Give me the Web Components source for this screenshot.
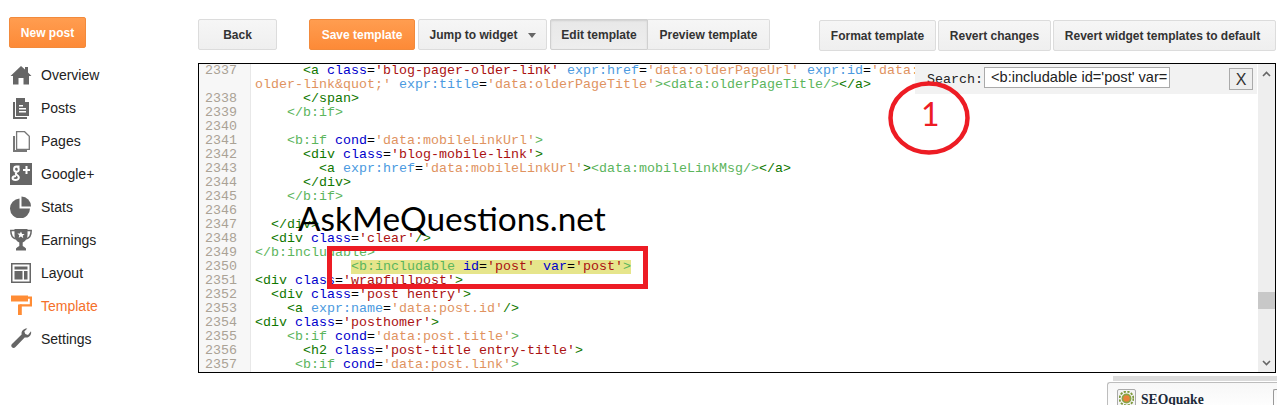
<!DOCTYPE html>
<html><head><meta charset="utf-8"><style>
html,body{margin:0;padding:0;background:#fff;width:1277px;height:405px;overflow:hidden}
body{font-family:"Liberation Sans",Arial,sans-serif}
</style></head><body>
<x-app></x-app>
<script>
const ICONS={
home:'<svg width="22" height="22" viewBox="0 0 22 22"><path fill="#666" d="M11 2 L15 5.6V3h3v5.4L21.5 12H19v8.500h-5.500V14h-5v6.500H3V12H.5z"/></svg>',
posts:'<svg width="22" height="22" viewBox="0 0 22 22"><path fill="#666" d="M3 5h2v15h12v2H3z"/><path fill="#666" d="M6 1h9v4h4v14H6z"/><path fill="#fff" d="M16 1l3 3h-3zM9 8h4v1.500H9zM9 11h7v1.500H9zM9 14h7v1.500H9z"/></svg>',
pages:'<svg width="22" height="22" viewBox="0 0 22 22"><path fill="#777" d="M3 6h2v14h12v2H3z"/><path fill="#fff" stroke="#777" stroke-width="1.300" d="M6.600 1.700h8l4.700 4.500v13.200H6.600z"/></svg>',
gplus:'<svg width="22" height="22" viewBox="0 0 22 22"><rect width="22" height="22" fill="#666"/><path fill="none" stroke="#fff" stroke-width="2" d="M9.500 3.500H6.500C3.500 3.500 3 8.500 6.500 8.800 9.500 9 9.500 4 6.500 3.500M6.500 9.500c-1 1-1 1.500 .5 2.500 3 2 2 5-1.500 5S1 13.500 6 13"/><path fill="none" stroke="#fff" stroke-width="2" d="M13 7h7M16.500 3v8"/></svg>',
stats:'<svg width="22" height="22" viewBox="0 0 22 22"><path fill="#666" d="M9.500 2.500V12.500H20A10 10 0 1 1 9.500 2.500z"/><path fill="#666" d="M11.500 .5A10 10 0 0 1 21 10.500H11.500z"/></svg>',
trophy:'<svg width="22" height="22" viewBox="0 0 22 22"><path fill="#666" d="M4.500 0h13v6c0 4-2.500 6.500-4.800 7.400V17c1 .8 2.300 1.200 3.300 2.500v2H6v-2c1-1.300 2.300-1.700 3.300-2.500v-3.600C7 12.500 4.500 10 4.500 6z"/><path fill="none" stroke="#666" stroke-width="1.500" d="M5 1.500H.8c0 5 1.500 7.500 5 8.500M17 1.500h4.200c0 5-1.500 7.500-5 8.500"/><path fill="#fff" d="M11 2.500l1.100 2.400 2.500.2-1.900 1.700.6 2.500L11 7.500 8.700 8.800l.6-2.500-1.900-1.700 2.500-.2z"/></svg>',
layout:'<svg width="22" height="22" viewBox="0 0 22 22"><path fill="#666" fill-rule="evenodd" d="M1 1h20v20H1zM2.500 2.500v17h17v-17z"/><path fill="#666" d="M4.500 4.500h13v3h-13zM4.500 9h8v8.500h-8zM14 9h3.500v8.500H14z"/></svg>',
template:'<svg width="22" height="22" viewBox="0 0 22 22"><path fill="#ff8c35" d="M1 .5h17v6H1z"/><path fill="none" stroke="#ff8c35" stroke-width="2.200" d="M18 2.600h2.900v7.800H9.500"/><path fill="#ff8c35" d="M8 9.500h3.800v10.500H8z"/></svg>',
settings:'<svg width="22" height="22" viewBox="0 0 22 22"><path fill="#666" d="M21 3.200c.8 3-1.300 6.300-4.700 6.400-.6 0-1.100 0-1.600-.2L5.500 19c-1 1-2.500 1.300-3.500.3S1 17 2 16l9.600-9.500c-.5-2.500.7-5 3.500-5.800.8-.2 1.500-.2 2.200-.1l-3 3 1 2.500 2.700.8z"/></svg>'
};

class XNavItem extends HTMLElement{
  constructor(){super();const s=this.attachShadow({mode:'open'});
    s.innerHTML=`<style>
    :host{display:flex;align-items:center;height:33px;gap:9px;font:14px "Liberation Sans",Arial,sans-serif;color:#222}
    :host([active]){color:#f4702a}
    .i{width:22px;height:22px;display:block}
    svg{display:block}
    </style><span class="i"></span><slot></slot>`;
  }
  connectedCallback(){this.shadowRoot.querySelector('.i').innerHTML=ICONS[this.getAttribute('icon')]||''}
}
customElements.define('x-nav-item',XNavItem);

class XBtn extends HTMLElement{
  constructor(){super();this.attachShadow({mode:'open'}).innerHTML=`<style>
    :host{display:inline-flex;align-items:center;justify-content:center;box-sizing:border-box;height:31px;padding:0 6px;
      font:bold 12px "Liberation Sans",Arial,sans-serif;color:#333;white-space:nowrap;
      background:linear-gradient(#f6f6f6,#efefef);border:1px solid #dcdcdc;border-radius:2px}
    :host([primary]){color:#fff;background:linear-gradient(#ff9d50,#fd8a37);border-color:#f28a3c}
    :host([pressed]){background:linear-gradient(#e8e8e8,#eeeeee);border-color:#d0d0d0;box-shadow:inset 0 1px 2px rgba(0,0,0,.1)}
    :host([seg-l]){border-radius:2px 0 0 2px}
    :host([seg-r]){border-radius:0 2px 2px 0;border-left:0}
    .c{width:0;height:0;border:4px solid transparent;border-top:5px solid #666;border-bottom:0;margin-left:10px;margin-top:2px}
    :host(:not([caret])) .c{display:none}
    </style><slot></slot><span class="c"></span>`;}
}
customElements.define('x-btn',XBtn);

class XSidebar extends HTMLElement{
  constructor(){super();this.attachShadow({mode:'open'}).innerHTML=`<style>
    :host{display:block;box-sizing:border-box;width:198px;padding:17px 0 0 10px}
    x-btn{width:77px;margin-left:-1px;margin-bottom:10px;display:flex}
    nav{display:flex;flex-direction:column}
    </style>
    <x-btn primary>New post</x-btn>
    <nav>
    <x-nav-item icon="home">Overview</x-nav-item>
    <x-nav-item icon="posts">Posts</x-nav-item>
    <x-nav-item icon="pages">Pages</x-nav-item>
    <x-nav-item icon="gplus">Google+</x-nav-item>
    <x-nav-item icon="stats">Stats</x-nav-item>
    <x-nav-item icon="trophy">Earnings</x-nav-item>
    <x-nav-item icon="layout">Layout</x-nav-item>
    <x-nav-item icon="template" active>Template</x-nav-item>
    <x-nav-item icon="settings">Settings</x-nav-item>
    </nav>`;}
}
customElements.define('x-sidebar',XSidebar);

class XToolbar extends HTMLElement{
  constructor(){super();this.attachShadow({mode:'open'}).innerHTML=`<style>
    :host{display:flex;align-items:flex-start;height:44px;padding-top:19px;box-sizing:content-box}
    .g{display:flex}
    .r{display:flex;gap:2px;margin-left:auto;margin-top:1px}
    </style>
    <x-btn style="width:79px">Back</x-btn>
    <x-btn primary style="width:106px;margin-left:32px">Save template</x-btn>
    <x-btn caret style="width:129px;margin-left:3px">Jump to widget</x-btn>
    <div class="g" style="margin-left:3px">
      <x-btn pressed seg-l style="width:98px">Edit template</x-btn>
      <x-btn seg-r style="width:122px">Preview template</x-btn>
    </div>
    <div class="r">
      <x-btn style="width:117px">Format template</x-btn>
      <x-btn style="width:113px">Revert changes</x-btn>
      <x-btn style="width:223px;padding:0 10px 0 6px">Revert widget templates to default</x-btn>
    </div>`;}
}
customElements.define('x-toolbar',XToolbar);

const esc=t=>t.replace(/&/g,'&amp;').replace(/</g,'&lt;');
class XCodeLine extends HTMLElement{
  constructor(){super();this.attachShadow({mode:'open'}).innerHTML=`<style>
    :host{display:flex;font:13.333px/14px "Liberation Mono","Courier New",monospace;color:#000}
    .n{flex:none;box-sizing:border-box;width:52px;padding-left:6px;background:#f7f7f7;border-right:1px solid #e8e8e8;color:#aaa295}
    .c{flex:1;min-width:0;padding-left:4px;overflow:hidden}
    .r{display:block;height:14px;white-space:pre}
    .t{color:#170}.a{color:#00c}.s{color:#a11}
    .T{color:#5cb55c}.A{color:#4b9ae0}.S{color:#e0935f}.p{color:#000}
    .h{background:#e6e58b;display:inline-block;height:15px}
    </style><div class="n"></div><div class="c"></div>`;}
  set data(d){
    this.shadowRoot.querySelector('.n').textContent=d.n;
    const tok=a=>a.map(([k,t])=>`<span class="${k}">${esc(t)}</span>`).join('');
    const rows=d.rows||[d.c];
    const pad=d.hl?d.hl:0;
    this.shadowRoot.querySelector('.c').innerHTML=rows.map(r=>{
      const inner=tok(r);
      return `<span class="r">${pad?' '.repeat(pad)+`<span class="h">${inner}</span>`:inner}</span>`;
    }).join('');
  }
}
customElements.define('x-code-line',XCodeLine);

const sp=n=>['p',' '.repeat(n)];
const LINES=[
{n:2337,rows:[
 [sp(6),['t','<a '],['a','class'],['p','='],['s',"'blog-pager-older-link'"],['p',' '],['A','expr:href'],['p','='],['S',"'data:olderPageUrl'"],['p',' '],['A','expr:id'],['p','='],['S',"'data:"]],
 [['S',"older-link&quot;'"],['p',' '],['A','expr:title'],['p','='],['S',"'data:olderPageTitle'"],['T','>'],['T','<data:olderPageTitle/>'],['t','</a>']]
]},
{n:2338,c:[sp(6),['t','</span>']]},
{n:2339,c:[sp(4),['T','</b:if>']]},
{n:2340,c:[['p',' ']]},
{n:2341,c:[sp(4),['T','<b:if '],['a','cond'],['p','='],['S',"'data:mobileLinkUrl'"],['T','>']]},
{n:2342,c:[sp(6),['t','<div '],['a','class'],['p','='],['s',"'blog-mobile-link'"],['t','>']]},
{n:2343,c:[sp(8),['t','<a '],['A','expr:href'],['p','='],['S',"'data:mobileLinkUrl'"],['t','>'],['T','<data:mobileLinkMsg/>'],['t','</a>']]},
{n:2344,c:[sp(6),['t','</div>']]},
{n:2345,c:[sp(4),['T','</b:if>']]},
{n:2346,c:[['p',' ']]},
{n:2347,c:[sp(2),['t','</div>']]},
{n:2348,c:[sp(2),['t','<div '],['a','class'],['p','='],['s',"'clear'"],['t','/>']]},
{n:2349,c:[['T','</b:includable>']]},
{n:2350,hl:12,c:[['T','<b:includable '],['a','id'],['p','='],['s',"'post'"],['p',' '],['a','var'],['p','='],['s',"'post'"],['T','>']]},
{n:2351,c:[['t','<div '],['a','class'],['p','='],['s',"'wrapfullpost'"],['t','>']]},
{n:2352,c:[sp(2),['t','<div '],['a','class'],['p','='],['s',"'post hentry'"],['t','>']]},
{n:2353,c:[sp(4),['t','<a '],['A','expr:name'],['p','='],['S',"'data:post.id'"],['t','/>']]},
{n:2354,c:[['t','<div '],['a','class'],['p','='],['s',"'posthomer'"],['t','>']]},
{n:2355,c:[sp(4),['T','<b:if '],['a','cond'],['p','='],['S',"'data:post.title'"],['T','>']]},
{n:2356,c:[sp(6),['t','<h2 '],['a','class'],['p','='],['s',"'post-title entry-title'"],['t','>']]},
{n:2357,c:[sp(5),['T','<b:if '],['a','cond'],['p','='],['S',"'data:post.link'"],['T','>']]},
];

class XSearch extends HTMLElement{
  constructor(){super();this.attachShadow({mode:'open'}).innerHTML=`<style>
    :host{position:absolute;left:716px;top:0;width:342px;height:30px;background:#f2f2f2;display:flex;align-items:flex-start;box-sizing:border-box;padding-left:12px;padding-top:3px}
    .l{font:13.333px/16px "Liberation Mono",monospace;color:#222;width:57px;margin-top:5px}
    .i{box-sizing:border-box;width:186px;height:21px;background:#fff;border:1px solid #aaa;font:14.600px/18px "Liberation Sans",Arial,sans-serif;color:#222;padding-left:6px;white-space:pre;overflow:hidden}
    .x{box-sizing:border-box;margin-left:59px;margin-top:1px;width:24px;height:22px;border:1px solid #aaa;background:#eee;font:16px/21px "Liberation Sans",Arial,sans-serif;color:#333;text-align:center}
    </style><span class="l">Search:</span><div class="i">&lt;b:includable id='post' var=</div><div class="x">X</div>`;}
}
customElements.define('x-search',XSearch);

class XScrollbar extends HTMLElement{
  constructor(){super();this.attachShadow({mode:'open'}).innerHTML=`<style>
    :host{display:flex;flex:none;width:17px;flex-direction:column;background:#eee;position:relative;justify-content:space-between;align-items:center;box-sizing:border-box;padding:7px 0 6px}
    .th{position:absolute;left:0;right:0;top:228px;height:17px;background:#c8c8c8}
    svg{display:block}
    </style>
    <svg width="9" height="6"><path d="M1 5l3.500-3.500L8 5" fill="none" stroke="#666" stroke-width="1.600"/></svg>
    <div class="th"></div>
    <svg width="9" height="6"><path d="M1 1l3.500 3.500L8 1" fill="none" stroke="#666" stroke-width="1.600"/></svg>`;}
}
customElements.define('x-scrollbar',XScrollbar);

class XEditor extends HTMLElement{
  constructor(){super();this.attachShadow({mode:'open'}).innerHTML=`<style>
    :host{display:flex;box-sizing:border-box;height:310px;border:1px solid #000;position:relative;background:#fff;overflow:hidden}
    .b{flex:1;min-width:0;display:flex;flex-direction:column;overflow:hidden}
    .fill{flex:1;width:52px;background:#f7f7f7}
    </style><div class="b"></div><x-scrollbar></x-scrollbar><x-search></x-search>`;
    const b=this.shadowRoot.querySelector('.b');
    for(const d of LINES){const l=document.createElement('x-code-line');l.data=d;b.append(l)}
    const f=document.createElement('div');f.className='fill';b.append(f);
  }
}
customElements.define('x-editor',XEditor);

class XSeoquake extends HTMLElement{
  constructor(){super();this.attachShadow({mode:'open'}).innerHTML=`<style>
    :host{position:absolute;left:1107px;top:376px;width:170px;height:29px;display:block;overflow:hidden}
    .bar{height:5px;margin-left:6px;background:#dcdcdc}
    .box{box-sizing:border-box;height:30px;border:1px solid #bdbdbd;border-right:0;border-radius:3px 0 0 0;background:linear-gradient(#f7f7f7,#fff);display:flex;align-items:flex-start;padding:6px 0 0 9px;margin-top:1px}
    .ic{box-sizing:border-box;width:19px;height:19px;border:1px solid #aaa;border-radius:2px;background:#f4f4f4;display:flex;align-items:center;justify-content:center;flex:none}
    .t{font:bold 13.600px/21px "Liberation Serif",serif;color:#1c2a3a;margin-left:5px;flex:1}
    .e{box-sizing:border-box;width:4px;height:19px;border:1px solid #999;border-right:0;border-radius:2px 0 0 2px;flex:none}
    </style><div class="bar"></div><div class="box"><div class="ic"><svg width="15" height="15" viewBox="0 0 13 13"><circle cx="6.500" cy="6.500" r="6" fill="none" stroke="#7d9a3c" stroke-width="1.600" stroke-dasharray="2 1.200"/><circle cx="6.500" cy="6.500" r="4.300" fill="#8aa544"/><circle cx="6.500" cy="6.500" r="2.800" fill="#e8823a"/></svg></div><div class="t">SEOquake</div><div class="e"></div></div>`;}
}
customElements.define('x-seoquake',XSeoquake);

class XApp extends HTMLElement{
  constructor(){super();this.attachShadow({mode:'open'}).innerHTML=`<style>
    :host{display:flex;width:1277px;height:405px;position:relative;overflow:hidden;background:#fff}
    main{flex:none;width:1078px;display:flex;flex-direction:column}
    .ask{position:absolute;left:298px;top:196px;font:33.400px/44px "Lato",sans-serif;color:#000;white-space:nowrap}
    .rect{position:absolute;left:327px;top:246px;width:321px;height:43px;box-sizing:border-box;border:5px solid #ed1c24}
    svg.ring{position:absolute;left:888px;top:81px}
    .one{position:absolute;left:921px;top:96px;font:32px/36px "Lato",sans-serif;color:#ed1c24}
    </style>
    <x-sidebar></x-sidebar>
    <main><x-toolbar></x-toolbar><x-editor></x-editor></main>
    <svg class="ring" width="84" height="74"><ellipse cx="41" cy="37" rx="38.500" ry="34.500" fill="none" stroke="#ed1c24" stroke-width="4.500"/></svg>
    <div class="one">1</div>
    <div class="ask">AskMeQuestions.net</div>
    <div class="rect"></div>
    <x-seoquake></x-seoquake>`;}
}
customElements.define('x-app',XApp);
</script>
</body></html>
